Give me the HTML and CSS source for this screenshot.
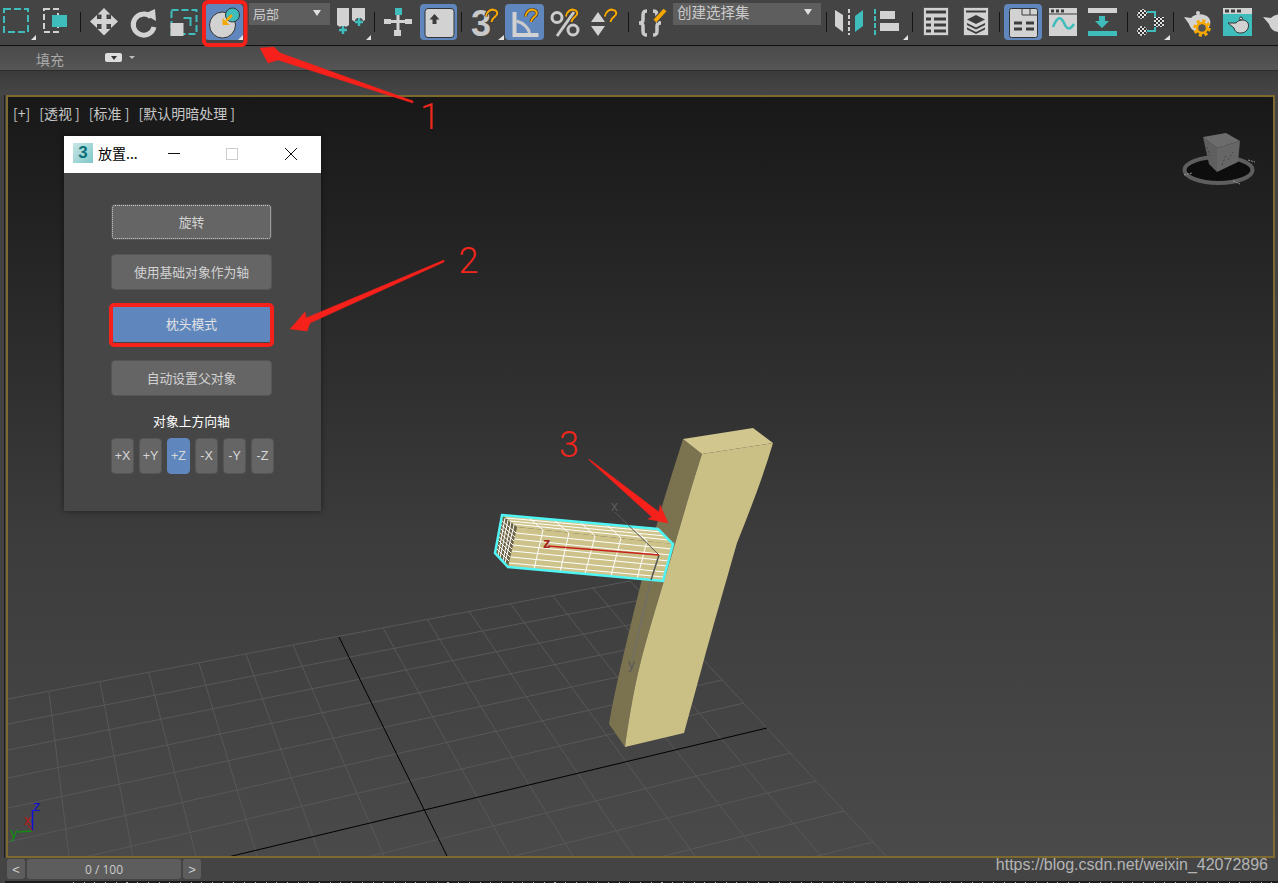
FILE: index.html
```html
<!DOCTYPE html>
<html lang="zh-CN">
<head>
<meta charset="utf-8">
<title>3ds Max 放置工具</title>
<link rel="stylesheet" href="styles.css">
</head>
<body>
<svg class="defs" width="0" height="0" aria-hidden="true">
  <defs>
    <symbol id="magnet" viewBox="0 0 16 17" overflow="visible">
      <path class="mag-under" d="M2 9C3 3 8 1 11 2C15 3 15 7 12 9C10 11 8 12 8 15"/>
      <path class="mag" d="M2 9C3 3 8 1 11 2C15 3 15 7 12 9C10 11 8 12 8 15"/>
    </symbol>
    <pattern id="chk" width="4" height="4" patternUnits="userSpaceOnUse">
      <rect width="4" height="4" fill="#e0e0e0"/>
      <rect width="2" height="2" fill="#333"/>
      <rect x="2" y="2" width="2" height="2" fill="#333"/>
    </pattern>
  </defs>
</svg>

<div class="app">
  <header class="toolbar">
    <div class="tool"><svg class="ic" viewBox="-4 0 40 40"><rect class="dash-teal" x="4" y="9" width="24" height="23"/><polygon class="tri" points="31,40 36,40 36,35"/></svg></div>
    <div class="tool"><svg class="ic" viewBox="35 0 40 40"><rect class="dash-white" x="44" y="9" width="14" height="23"/><rect class="teal" x="52" y="15" width="15" height="12"/></svg></div>
    <div class="sep"></div>
    <div class="tool"><svg class="ic" viewBox="84 0 40 40"><path class="light" d="M104 8L110.500 14.500H106.500V19H111V15L118 21.500L111 28V24H106.500V29H110.500L104 35.500L97.500 29H101.500V24H97V28L90 21.500L97 15V19H101.500V14.500H97.500Z"/></svg></div>
    <div class="tool"><svg class="ic" viewBox="124 0 40 40"><path class="stroke-light" d="M151 17A10.500 10.500 0 1 0 154 27"/><polygon class="light" points="144,14 155,9 156,21"/></svg></div>
    <div class="tool"><svg class="ic" viewBox="163.500 0 40 40"><rect class="dash-teal" x="171" y="10" width="25" height="24"/><rect class="light" x="170" y="23" width="13" height="13"/><path class="stroke-teal" d="M183 18H190V26"/></svg></div>
    <div class="tool tool-on"><svg class="ic ic-on" viewBox="204 0 40 40"><circle class="light edge" cx="222.500" cy="25" r="13"/><circle class="teal edge" cx="232.500" cy="15" r="7"/><path class="stroke-gold" d="M232 15L226 21"/><polygon class="gold" points="222.500,25 222.500,18 229.500,25"/><polygon class="tri" points="238,40 243,40 243,35"/></svg></div>
    <div class="combo combo-short"><span>局部</span><i class="caret"></i></div>
    <div class="tool"><svg class="ic" viewBox="331 0 40 40"><path class="light" d="M337 8H349V25L343 29L337 25Z"/><path class="light" d="M352 8H365V20L358.500 24L352 20Z"/><path class="stroke-plus-under" d="M343 26V34M339 30H347M359 18V26M355 22H363"/><path class="stroke-plus" d="M343 26V34M339 30H347M359 18V26M355 22H363"/><polygon class="tri" points="366,40 371,40 371,35"/></svg></div>
    <div class="sep"></div>
    <div class="tool"><svg class="ic" viewBox="378 0 40 40"><path class="stroke-bar" d="M398 14V30M391 21.500H405"/><rect class="teal" x="395" y="8" width="7" height="7"/><rect class="light" x="384" y="19" width="7" height="5"/><rect class="light" x="405" y="19" width="7" height="5"/><rect class="light" x="394" y="30" width="7" height="6"/></svg></div>
    <div class="tool tool-on"><svg class="ic ic-on" viewBox="418.500 0 40 40"><rect class="light edge" x="424.500" y="8.500" width="29" height="29" rx="3"/><polygon class="dark" points="434,14 439,19.500 436,19.500 436,24 432,24 432,19.500 429,19.500"/></svg></div>
    <div class="sep"></div>
    <div class="tool"><svg class="ic" viewBox="465 0 40 40"><text class="glyph-three" x="471" y="36">3</text><use href="#magnet" x="484" y="8" width="15" height="16"/><polygon class="tri" points="498,40 504,40 504,35"/></svg></div>
    <div class="tool tool-on"><svg class="ic ic-on" viewBox="504.500 0 40 40"><path class="light" d="M512 12H516V33H538V37H512Z"/><path class="stroke-mid" d="M516 21C523 23 528 28 529 33"/><use href="#magnet" x="523" y="8" width="15" height="16"/></svg></div>
    <div class="tool"><svg class="ic" viewBox="545 0 40 40"><circle class="ring" cx="557" cy="17.500" r="5"/><circle class="ring" cx="573" cy="30" r="5"/><path class="stroke-mid" d="M574 12L557 36"/><use href="#magnet" x="564" y="8" width="15" height="16"/></svg></div>
    <div class="tool"><svg class="ic" viewBox="584 0 40 40"><polygon class="light" points="598,12 605,22 591,22"/><polygon class="light" points="591,26 605,26 598,36"/><use href="#magnet" x="603" y="8" width="15" height="16"/></svg></div>
    <div class="sep"></div>
    <div class="tool"><svg class="ic" viewBox="631 0 40 40"><path class="stroke-brace" d="M647 11C643 11 643 13 643 17V20C643 22 642 23 639 23C642 23 643 24 643 26V31C643 34 644 35 647 35"/><path class="stroke-brace" d="M653 11C657 11 657 13 657 17V20C657 22 658 23 661 23C658 23 657 24 657 26V31C657 34 656 35 653 35"/><path class="stroke-pencil-under" d="M665 10L655 21"/><path class="stroke-pencil" d="M665 10L655 21"/></svg></div>
    <div class="combo combo-long"><span>创建选择集</span><i class="caret"></i></div>
    <div class="sep"></div>
    <div class="tool"><svg class="ic" viewBox="828 0 40 40"><polygon class="light" points="835,10 843,15 843,32 835,26"/><polygon class="teal" points="855,16 863,10 863,26 855,32"/><path class="stroke-dash" d="M849 9V35"/></svg></div>
    <div class="tool"><svg class="ic" viewBox="867 0 40 40"><path class="stroke-dash-teal" d="M875 9V35"/><rect class="light" x="880" y="11" width="15" height="8"/><rect class="light" x="880" y="23" width="19" height="8"/><polygon class="tri" points="903,40 908,40 908,35"/></svg></div>
    <div class="sep"></div>
    <div class="tool"><svg class="ic" viewBox="916 0 40 40"><rect class="light edge-soft" x="923.500" y="7.500" width="25" height="28"/><path class="stroke-dark" d="M926 12H946M926 19H931M934 19H946M926 25H931M934 25H946M926 31H931M934 31H946"/></svg></div>
    <div class="tool"><svg class="ic" viewBox="956 0 40 40"><rect class="light edge-soft" x="963.500" y="7.500" width="25" height="28"/><path class="stroke-dark-thin" d="M966 11.500H986"/><polygon class="dark" points="976,15 985,19.500 976,24 967,19.500"/><polygon class="dark" points="967,23 976,27.500 985,23 985,25 976,29.500 967,25"/><polygon class="dark" points="967,27.500 976,32 985,27.500 985,29.500 976,34 967,29.500"/></svg></div>
    <div class="sep"></div>
    <div class="tool tool-on"><svg class="ic ic-on" viewBox="1003 0 40 40"><rect class="light edge" x="1009.500" y="8.500" width="28" height="29" rx="2"/><path class="stroke-thin-dark" d="M1022 9V15H1037M1030 9V15"/><path class="stroke-dark" d="M1014 23H1022M1026 23H1034M1014 29H1022M1026 29H1034"/></svg></div>
    <div class="tool"><svg class="ic" viewBox="1042 0 40 40"><rect class="light" x="1049" y="8" width="28" height="28"/><path class="stroke-thin-dark" d="M1049 14H1077"/><path class="stroke-dark" d="M1051 11H1054M1056 11H1059M1061 11H1064"/><path class="stroke-wave" d="M1053 27C1058 15 1061 17 1064 23C1067 30 1070 30 1074 24"/></svg></div>
    <div class="tool"><svg class="ic" viewBox="1082 0 40 40"><rect class="light" x="1088" y="8" width="29" height="5"/><polygon class="teal" points="1102,28 1095,21 1099,21 1099,16 1105,16 1105,21 1109,21"/><rect class="teal" x="1088" y="31" width="29" height="5"/></svg></div>
    <div class="sep"></div>
    <div class="tool"><svg class="ic" viewBox="1130 0 40 40"><path class="stroke-bracket" d="M1147 12H1155V18M1147 31H1155V26"/><circle class="checker" cx="1142" cy="14" r="5"/><circle class="checker" cx="1142" cy="31" r="5"/><rect class="checker" x="1154" y="17" width="10" height="10"/><polygon class="tri" points="1164,40 1170,40 1170,35"/></svg></div>
    <div class="sep"></div>
    <div class="tool"><svg class="ic" viewBox="1178 0 40 40"><path class="light" d="M1191 18C1195 13 1205 13 1209 18C1213 24 1208 32 1200 32C1192 32 1190 27 1189 24L1184 17Z"/><circle class="light" cx="1198" cy="13" r="2"/><circle class="gear-teeth" cx="1202" cy="28" r="7"/><circle class="gear-ring" cx="1202" cy="28" r="5"/></svg></div>
    <div class="tool"><svg class="ic" viewBox="1217 0 40 40"><rect class="teal" x="1223" y="14" width="29" height="22"/><rect class="light" x="1223" y="8" width="29" height="6"/><path class="stroke-dark" d="M1225 11H1229M1231 11H1235M1237 11H1241"/><path class="light edge" d="M1236 23C1239 19 1246 19 1248 23C1250 28 1246 33 1241 33C1236 33 1235 31 1234 28L1228 23Z"/><circle class="light edge" cx="1241" cy="18.500" r="1.500"/></svg></div>
    <div class="tool"><svg class="ic" viewBox="1250 0 40 40"><path class="light" d="M1271 18C1275 13 1285 13 1289 18V32H1280C1272 32 1270 27 1269 24L1263 17Z"/></svg></div>
  </header>

  <div class="ribbon">
    <span class="ribbon-label">填充</span>
    <span class="ribbon-chip"><i class="chip-caret"></i></span>
    <i class="ribbon-caret"></i>
  </div>
  <div class="subbar"></div>

  <main class="viewport">
    <svg class="scene" viewBox="8 97 1265 759" aria-hidden="true">
      <g class="grid">
        <path d="M8 699L630 581M8 724L646 599M8 750L664 618M8 778L683 638M8 808L702 659M8 842L722 680M8 875L744 703M8 945L791 753M8 982L816 781M8 1020L844 811M8 1060L873 842"/>
        <path d="M49 692L69 856M100 682L133 856M149 673L196 856M199 663L257 856M246 654L320 856M293 645L384 856M383 628L510 856M427 619L573 856M469 611L633 856M510 603L695 856M552 595L760 856M592 587L821 856M630 581L886 856"/>
      </g>
      <path class="axis" d="M339 637L447 856M228 857L767 728"/>

      <path class="view-side" d="M683 439L702 454C692 485 685 510 677 537C665 580 648 630 638 673C632 700 628 725 625 747L609 724C612 705 616 688 620 670C627 640 633 615 640 587C648 555 658 520 666 493Z"/>
      <path class="view-front" d="M702 454L773 443C762 480 750 510 737 543C725 585 712 630 702 667L684 733L625 747C628 725 632 700 638 673C648 630 665 580 677 537C685 510 692 485 702 454Z"/>
      <polygon class="view-top" points="683,439 753,428 773,443 702,454"/>

      <path class="gizmo-back" d="M651 580L632 660"/>
      <text class="gizmo-label" x="628" y="669">y</text>

      <polygon class="box-left" points="502,515 517,527 508,567 495,553"/>
      <polygon class="box-top" points="502,515 658,529 673,544 517,527"/>
      <polygon class="box-front" points="517,527 673,544 663,581 508,567"/>
      <path class="mesh" d="M516 533L672 549M514.500 539L670.500 555M513 545L669 561M512 551L667 566M510.500 557L665.500 572M509 563L664 577M543 530L534 569M569 533L560 572M595 536L585 574M621 538L611 576M647 541L637 579M506 518L662 532M509.500 521L665.500 536M513 524L669 540M528 517L543 530M554 520L569 533M580 522L595 536M606 524L621 538M632 527L647 541"/>
      <path class="mesh" d="M501 520L516 533M500 524L515 537M500 528L514 541M499 532L513 545M498 536L512 549M498 540L511 553M497 544L510 557M496 548L509 561M505 518L498 556M508 520L500 558M511 522L503 561M514 525L505 563"/>
      <polygon class="box-outline" points="502,515 658,529 673,544 663,581 508,567 495,553"/>

      <path class="gizmo-line" d="M615 512L659 555"/>
      <path class="gizmo-y" d="M659 555L651 580"/>
      <path class="gizmo-z" d="M659 555L548 546"/>
      <text class="gizmo-label" x="611" y="511">x</text>
      <text class="gizmo-z-label" x="543" y="548">z</text>

      <g class="cube">
        <ellipse class="cube-shadow" cx="1218.500" cy="170" rx="34" ry="13"/>
        <ellipse class="cube-ring" cx="1218.500" cy="170" rx="34" ry="13"/>
        <polygon class="cube-left" points="1203,137 1217,148 1217,172 1209,164"/>
        <polygon class="cube-right" points="1217,148 1240,141 1238,162 1217,172"/>
        <polygon class="cube-top" points="1203,137 1226,133 1240,141 1217,148"/>
        <path class="cube-marks" d="M1222 165L1226 155M1228 160L1233 152M1207 147L1210 156"/>
        <path class="cube-ticks" d="M1184 175L1192 173M1233 181L1240 184M1248 160L1255 162"/>
      </g>

      <path class="tri-z" d="M32.500 810V831"/>
      <path class="tri-y" d="M18 832L32.500 831"/>
      <path class="tri-x" d="M27 824L32.500 831"/>
      <text class="tri-label tri-label-z" x="33" y="811">z</text>
      <text class="tri-label tri-label-x" x="24" y="825">x</text>
      <text class="tri-label tri-label-y" x="10" y="838">y</text>
    </svg>

    <div class="vp-labels">
      <span class="vp-plus">[+]</span>
      <span class="vp-view">[透视 ]</span>
      <span class="vp-view">[标准 ]</span>
      <span>[默认明暗处理 ]</span>
    </div>
  </main>

  <footer class="timeline">
    <button class="tl-btn">&lt;</button>
    <div class="tl-track">0 / 100</div>
    <button class="tl-btn">&gt;</button>
    <span class="watermark">https://blog.csdn.net/weixin_42072896</span>
  </footer>
  <div class="ruler"></div>
</div>

<section class="dialog">
  <div class="dlg-title">
    <span class="dlg-logo">3</span>
    <span class="dlg-name">放置...</span>
    <svg class="dlg-ctl" viewBox="0 0 157 37" aria-hidden="true">
      <path class="ctl-dark" d="M4 17.500H16"/>
      <rect class="ctl-grey" x="62.500" y="12.500" width="11" height="11"/>
      <path class="ctl-dark" d="M121 12L133 24M133 12L121 24"/>
    </svg>
  </div>
  <div class="dlg-body">
    <button class="dlg-btn dlg-focus">旋转</button>
    <button class="dlg-btn dlg-m14">使用基础对象作为轴</button>
    <button class="dlg-btn dlg-on dlg-m16">枕头模式</button>
    <button class="dlg-btn dlg-m18">自动设置父对象</button>
    <div class="dlg-label">对象上方向轴</div>
    <div class="axis-row">
      <button class="axis-btn">+X</button>
      <button class="axis-btn">+Y</button>
      <button class="axis-btn axis-on">+Z</button>
      <button class="axis-btn">-X</button>
      <button class="axis-btn">-Y</button>
      <button class="axis-btn">-Z</button>
    </div>
  </div>
</section>

<svg class="notes" viewBox="0 0 1278 883" aria-hidden="true">
  <rect class="note-box" x="204" y="2" width="41.500" height="43" rx="4"/>
  <rect class="note-box" x="111" y="305" width="161" height="40" rx="3"/>
  <polygon class="note-fill" points="260,48 274,47 280,53 413,101 413,103 278,60 268,63"/>
  <polygon class="note-fill" points="290,329 305,312 306,318 444,260 444,262 310,323 307,331"/>
  <polygon class="note-fill" points="668,523 660,505 659,512 589,459 589,460 652,517 648,519"/>
  <text class="note-num" x="430" y="129">1</text>
  <text class="note-num" x="468.500" y="273">2</text>
  <text class="note-num" x="569" y="457">3</text>
</svg>
</body>
</html>
```

FILE: styles.css
```css
* { box-sizing: border-box; }

html, body {
  margin: 0;
  width: 1278px;
  height: 883px;
  overflow: hidden;
  background: #444;
  font-family: "Noto Sans CJK SC", "Liberation Sans", sans-serif;
  color: #ccc;
}

.defs { position: absolute; }

.app { display: flex; flex-direction: column; height: 883px; }

/* main toolbar */
.toolbar {
  display: grid;
  grid-template-columns: 32px 46px 4px 44px 36px 43px 38px 87px 42px 4px 44px 37px 8px 40px 39px 42px 36px 12px 34px 153px 10px 34px 44px 6px 42px 38px 9px 38px 40px 40px 10px 36px 10px 40px 38px 28px;
  align-items: start;
  height: 46px;
  background: #444;
  border-bottom: 1px solid #111;
  overflow: hidden;
}
.tool { display: flex; justify-content: center; height: 45px; }
.tool-on {
  height: 36px;
  margin-top: 4px;
  background: #5f87bd;
  border-radius: 4px;
}
.ic { display: block; flex: none; width: 40px; height: 40px; overflow: visible; }
.ic-on { margin-top: -4px; }
.sep { width: 1px; height: 20px; margin: 12px auto 0; background: #151515; }

.combo {
  display: flex;
  align-items: center;
  justify-content: space-between;
  justify-self: end;
  height: 22px;
  margin-top: 3px;
  padding: 0 9px 4px 4px;
  background: #5e5e5e;
  line-height: 1;
  color: #ccc;
}
.combo-short { width: 81px; font-size: 13px; padding-bottom: 2px; }
.combo-long { width: 148px; font-size: 14.500px; }
.caret {
  width: 0;
  height: 0;
  border-left: 4px solid transparent;
  border-right: 4px solid transparent;
  border-top: 6px solid #e0e0e0;
}

/* icon paints */
.light { fill: #d2d2d2; }
.teal { fill: #3fbcbc; }
.gold { fill: #f6a800; }
.dark { fill: #3c3c3c; }
.tri { fill: #e4e4e4; }
.edge { stroke: #333; stroke-width: 1; }
.edge-soft { stroke: #555; stroke-width: 1; }
.checker { fill: url(#chk); }
.dash-teal { fill: none; stroke: #3fbcbc; stroke-width: 2; stroke-dasharray: 7 3; }
.dash-white { fill: none; stroke: #d2d2d2; stroke-width: 2; stroke-dasharray: 6 3; }
.stroke-light { fill: none; stroke: #d2d2d2; stroke-width: 5; }
.stroke-teal { fill: none; stroke: #3fbcbc; stroke-width: 2; }
.stroke-gold { fill: none; stroke: #f6a800; stroke-width: 2.500; }
.stroke-plus { fill: none; stroke: #3fbcbc; stroke-width: 2.500; }
.stroke-plus-under { fill: none; stroke: #444; stroke-width: 5; }
.stroke-bar { fill: none; stroke: #d2d2d2; stroke-width: 3; }
.stroke-mid { fill: none; stroke: #cbcbcb; stroke-width: 3; }
.stroke-brace { fill: none; stroke: #cbcbcb; stroke-width: 3.500; }
.ring { fill: none; stroke: #cbcbcb; stroke-width: 3; }
.stroke-pencil { fill: none; stroke: #f6a800; stroke-width: 4; }
.stroke-pencil-under { fill: none; stroke: #444; stroke-width: 6; }
.stroke-dash { fill: none; stroke: #d2d2d2; stroke-width: 2; stroke-dasharray: 4 2; }
.stroke-dash-teal { fill: none; stroke: #3fbcbc; stroke-width: 2; stroke-dasharray: 5 2; }
.stroke-dark { fill: none; stroke: #3c3c3c; stroke-width: 3; }
.stroke-dark-thin { fill: none; stroke: #3c3c3c; stroke-width: 2; }
.stroke-thin-dark { fill: none; stroke: #3c3c3c; stroke-width: 1; }
.stroke-wave { fill: none; stroke: #3fbcbc; stroke-width: 2.500; }
.stroke-bracket { fill: none; stroke: #3fbcbc; stroke-width: 2; }
.gear-teeth { fill: none; stroke: #f6a800; stroke-width: 3.500; stroke-dasharray: 3 2.500; }
.gear-ring { fill: #555; stroke: #f6a800; stroke-width: 2.500; }
.mag { fill: none; stroke: #f6a800; stroke-width: 2.200; }
.mag-under { fill: none; stroke: #3c3c3c; stroke-width: 3.500; }
.glyph-three { font-family: "Liberation Sans", sans-serif; font-size: 36px; font-weight: 700; fill: #c8c8c8; }

/* ribbon */
.ribbon {
  display: flex;
  align-items: center;
  height: 25px;
  padding: 1px 0 0 36px;
  background: linear-gradient(#4a4a4a, #555);
  border-bottom: 1px solid #2c2c2c;
}
.ribbon-label { font-size: 14px; line-height: 1; color: #a8a8a8; }
.ribbon-chip {
  display: flex;
  align-items: center;
  justify-content: center;
  width: 17px;
  height: 9px;
  margin: -2px 0 0 41px;
  background: #ddd;
  border-radius: 2px;
}
.chip-caret {
  width: 0;
  height: 0;
  border-left: 3px solid transparent;
  border-right: 3px solid transparent;
  border-top: 4px solid #333;
}
.ribbon-caret {
  width: 0;
  height: 0;
  margin: -2px 0 0 7px;
  border-left: 3px solid transparent;
  border-right: 3px solid transparent;
  border-top: 3px solid #bbb;
}
.subbar { height: 24px; background: linear-gradient(#3b3b3b, #464646); }

/* viewport */
.viewport {
  position: relative;
  width: 1269px;
  height: 763px;
  margin-left: 6px;
  border: 2px solid #7d6a2f;
  background: linear-gradient(#181818, #3c3c3c 58%, #4a4a4a);
  box-shadow: -1px 0 0 #444, -2px 0 0 #1e1e1e;
}
.scene { display: block; width: 100%; height: 100%; }
.grid path { fill: none; stroke: #585858; stroke-width: 1; }
.axis { fill: none; stroke: #000; stroke-width: 1; }
.view-side { fill: #7b7350; }
.view-front { fill: #cabf85; }
.view-top { fill: #d0c68e; }
.box-left { fill: #6b6343; }
.box-top { fill: #cfc58c; }
.box-front { fill: #cdc38a; }
.mesh { fill: none; stroke: #fff; stroke-width: 1; }
.box-outline { fill: none; stroke: #4ff5f5; stroke-width: 2.500; }
.gizmo-line { fill: none; stroke: #555; stroke-width: 1; }
.gizmo-y { fill: none; stroke: #555; stroke-width: 1.500; }
.gizmo-back { fill: none; stroke: #6d6d70; stroke-width: 1; }
.gizmo-z { fill: none; stroke: #c8201c; stroke-width: 1.500; }
.gizmo-label { font: 14px "Liberation Sans", sans-serif; fill: #5a5a5a; }
.gizmo-z-label { font: 700 15px "Liberation Sans", sans-serif; fill: #a52421; }
.cube { filter: blur(.5px); }
.cube-shadow { fill: #0d0d0d; }
.cube-ring { fill: none; stroke: #5e5e5e; stroke-width: 4; }
.cube-left { fill: #5f5f5f; }
.cube-right { fill: #666; }
.cube-top { fill: #6c6c6c; }
.cube-marks { fill: none; stroke: #444; stroke-width: 1; stroke-dasharray: 2 2; }
.cube-ticks { fill: none; stroke: #9a9a9a; stroke-width: 1; stroke-dasharray: 2 1; }
.tri-z { fill: none; stroke: #1010d8; stroke-width: 1.500; }
.tri-y { fill: none; stroke: #0f8f0f; stroke-width: 1.500; }
.tri-x { fill: none; stroke: #b41a1a; stroke-width: 1; }
.tri-label { font: 15px "Liberation Sans", sans-serif; }
.tri-label-z { fill: #1010d8; }
.tri-label-x { fill: #b41a1a; }
.tri-label-y { fill: #0f8f0f; }

.vp-labels {
  position: absolute;
  top: 6px;
  left: 5px;
  display: flex;
  gap: 9px;
  font-size: 14px;
  line-height: 20px;
  color: #c6c6c6;
  white-space: nowrap;
}

/* timeline */
.timeline {
  display: flex;
  align-items: flex-start;
  height: 23px;
  padding: 1px 10px 0 7px;
  gap: 2px;
  background: #444;
}
.tl-btn {
  width: 18px;
  height: 20px;
  padding: 0;
  border: 0;
  border-radius: 3px;
  background: #5d5d5d;
  color: #d0d0d0;
  font: 13px "Liberation Sans", sans-serif;
}
.tl-track {
  width: 154px;
  height: 20px;
  border-radius: 3px;
  background: #5d5d5d;
  font: 12px/21px "Open Sans", sans-serif;
  text-align: center;
  color: #ccc;
}
.watermark {
  margin: -2px 0 0 auto;
  font: 16px/15px "Liberation Sans", sans-serif;
  color: #b4b4b4;
}
.ruler {
  height: 2px;
  margin-left: 5px;
  background:
    repeating-linear-gradient(90deg, #aaa 0 1px, transparent 1px 10.700px) 68px 1px / 100% 1px no-repeat,
    #1c1c1c;
}

/* placement dialog */
.dialog {
  position: absolute;
  top: 136px;
  left: 64px;
  width: 257px;
  height: 375px;
  display: flex;
  flex-direction: column;
  background: #464646;
  box-shadow: 0 0 6px rgba(0, 0, 0, .45);
}
.dlg-title {
  display: flex;
  align-items: center;
  flex: none;
  height: 37px;
  padding-left: 9px;
  background: #fff;
}
.dlg-logo {
  flex: none;
  width: 20px;
  height: 20px;
  margin-bottom: 4px;
  background: linear-gradient(135deg, #c9e6e6, #7fc7c9);
  font: 700 17px/20px "Liberation Sans", sans-serif;
  text-align: center;
  color: #0b6f78;
}
.dlg-name { flex: none; margin: 0 0 4px 5px; width: 64px; font-size: 14px; line-height: 1; color: #000; }
.dlg-ctl { flex: none; width: 157px; height: 37px; margin-left: 2px; }
.ctl-dark { fill: none; stroke: #111; stroke-width: 1; }
.ctl-grey { fill: none; stroke: #ccc; stroke-width: 1; }

.dlg-body {
  display: flex;
  flex-direction: column;
  padding: 31px 0 0 47px;
}
.dlg-btn {
  display: block;
  width: 161px;
  height: 36px;
  padding: 0;
  border: 1px solid #555;
  border-radius: 4px;
  background: #656565;
  font: 12.800px/1 "Noto Sans CJK SC", sans-serif;
  color: #d2d2d2;
}
.dlg-focus { outline: 1px dotted #d0d0d0; outline-offset: -2px; }
.dlg-m14 { margin-top: 14px; }
.dlg-m16 { margin-top: 16px; }
.dlg-m18 { margin-top: 18px; }
.dlg-on { background: #5f87bd; border-color: #5f87bd; color: #e2e2e2; }
.dlg-label {
  width: 161px;
  margin-top: 16px;
  font-size: 12.800px;
  line-height: 18px;
  text-align: center;
  color: #fff;
}
.axis-row { display: flex; gap: 5px; margin-top: 8px; }
.axis-btn {
  width: 23px;
  height: 36px;
  padding: 0;
  border: 1px solid #555;
  border-radius: 4px;
  background: #656565;
  font: 12.500px "Liberation Sans", sans-serif;
  color: #d8d8d8;
}
.axis-on { background: #5f87bd; border-color: #5f87bd; }

/* red annotations over the screenshot */
.notes { position: absolute; top: 0; left: 0; width: 1278px; height: 883px; pointer-events: none; }
.note-box { fill: none; stroke: #f5211a; stroke-width: 4; }
.note-fill { fill: #f5211a; stroke: #f5211a; stroke-width: .5; }
.note-num { font: 300 36px Roboto, sans-serif; fill: #f1261c; text-anchor: middle; }
```
